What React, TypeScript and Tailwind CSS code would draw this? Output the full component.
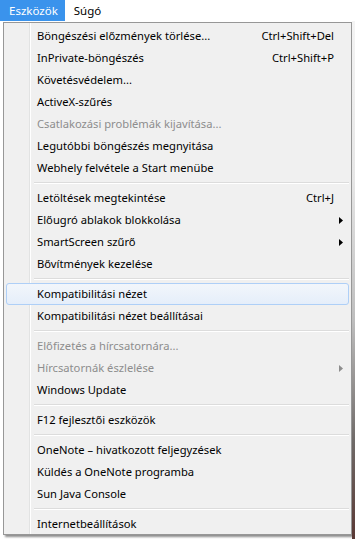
import React from 'react';

type Item =
  | { sep: true }
  | { label: string; shortcut?: string; disabled?: boolean; sub?: boolean; active?: boolean };

const items: Item[] = [
  { label: 'Böngészési előzmények törlése...', shortcut: 'Ctrl+Shift+Del' },
  { label: 'InPrivate-böngészés', shortcut: 'Ctrl+Shift+P' },
  { label: 'Követésvédelem...' },
  { label: 'ActiveX-szűrés' },
  { label: 'Csatlakozási problémák kijavítása...', disabled: true },
  { label: 'Legutóbbi böngészés megnyitása' },
  { label: 'Webhely felvétele a Start menübe' },
  { sep: true },
  { label: 'Letöltések megtekintése', shortcut: 'Ctrl+J' },
  { label: 'Előugró ablakok blokkolása', sub: true },
  { label: 'SmartScreen szűrő', sub: true },
  { label: 'Bővítmények kezelése' },
  { sep: true },
  { label: 'Kompatibilitási nézet', active: true },
  { label: 'Kompatibilitási nézet beállításai' },
  { sep: true },
  { label: 'Előfizetés a hírcsatornára...', disabled: true },
  { label: 'Hírcsatornák észlelése', disabled: true, sub: true },
  { label: 'Windows Update' },
  { sep: true },
  { label: 'F12 fejlesztői eszközök' },
  { sep: true },
  { label: 'OneNote – hivatkozott feljegyzések' },
  { label: 'Küldés a OneNote programba' },
  { label: 'Sun Java Console' },
  { sep: true },
  { label: 'Internetbeállítások' },
];

function Arrow({ disabled }: { disabled?: boolean }) {
  return (
    <svg width="4" height="7" viewBox="0 0 4 7" className="ml-auto mr-[-9px]">
      <path d="M0 0 L4 3.5 L0 7 Z" fill={disabled ? '#8d8d8d' : '#000'} />
    </svg>
  );
}

export default function App() {
  return (
    <div
      className="w-[355px] h-[539px] bg-white overflow-hidden flex flex-col text-[11.2px] text-black"
      style={{ fontFamily: '"Noto Sans", "DejaVu Sans", sans-serif' }}
    >
      {/* menu bar */}
      <div className="h-[21px] flex items-center bg-white shrink-0 text-[11.5px]">
        <div className="h-full pl-[9px] pr-[7px] flex items-center bg-[#3a93ec] text-white">Eszközök</div>
        <div className="h-full px-[9px] flex items-center">Súgó</div>
      </div>

      <div className="flex flex-1">
        <div className="w-[3px] bg-white" />

        {/* dropdown */}
        <div className="w-[349px] h-[513px] mt-[1px] border border-[#979797] bg-[#f0f0f0] px-[2px] pt-[2px] shadow-[2px_2px_2px_rgba(0,0,0,0.45)] bg-[linear-gradient(to_right,#f0f0f0_25px,#e2e3e3_25px,#e2e3e3_26px,#ffffff_26px,#ffffff_27px,#f0f0f0_27px)]">
          {items.map((it, i) =>
            'sep' in it ? (
              <div key={i} className="h-[8px] flex items-center pl-[28px]">
                <div className="w-full border-t border-[#dcdcdc] border-b border-b-white" />
              </div>
            ) : (
              <div
                key={i}
                className={`h-[22px] flex items-center pl-[30px] pr-[14px] rounded-[3px] border ${
                  it.active
                    ? 'border-[#aecff7] bg-[linear-gradient(to_bottom,#f2f6fb,#e5eefa)]'
                    : 'border-transparent'
                } ${it.disabled ? 'text-[#8d8d8d]' : 'text-black'}`}
              >
                <span className="whitespace-nowrap">{it.label}</span>
                {it.shortcut && <span className="ml-auto whitespace-nowrap">{it.shortcut}</span>}
                {it.sub && <Arrow disabled={it.disabled} />}
              </div>
            )
          )}
        </div>

        {/* page behind */}
        <div className="flex-1 bg-[linear-gradient(to_bottom,#f4f4f4_0px,#e6e6e6_160px,#bdbdbd_300px,#6f6a68_420px,#5a3a36_515px)]" />
      </div>
    </div>
  );
}
